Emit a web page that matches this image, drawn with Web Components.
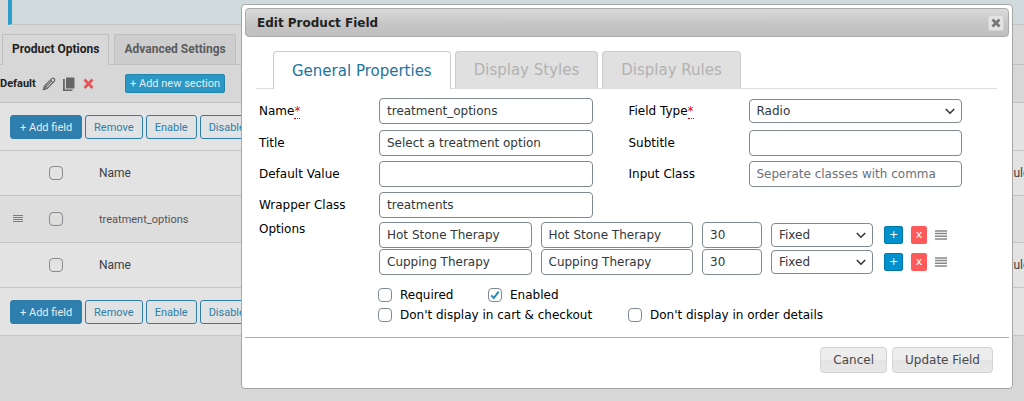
<!DOCTYPE html>
<html lang="en">
<head>
<meta charset="utf-8">
<title>Edit Product Field</title>
<style>
  body {
    margin: 0;
    min-height: 100vh;
    overflow: hidden;
    position: relative;
    background: #d7d7d7;
    font-family: Roboto, "Liberation Sans", sans-serif;
    font-size: 12px;
    color: #3c4146;
  }

  field-dialog {
    position: absolute;
    top: 4px;
    left: 241px;
    right: 11px;
  }
</style>
</head>
<body>
<admin-page>
  <page-tab slot="tabs" active>Product Options</page-tab>
  <page-tab slot="tabs">Advanced Settings</page-tab>
  <section-bar slot="section">Default</section-bar>
  <field-table slot="fields"></field-table>
</admin-page>

<field-dialog heading="Edit Product Field">
  <dialog-tabs slot="tabs" labels="General Properties,Display Styles,Display Rules"></dialog-tabs>
  <form-grid>
    <text-field label="Name" value="treatment_options" required></text-field>
    <select-field label="Field Type" value="Radio" required></select-field>
    <text-field label="Title" value="Select a treatment option"></text-field>
    <text-field label="Subtitle"></text-field>
    <text-field label="Default Value"></text-field>
    <text-field label="Input Class" placeholder="Seperate classes with comma"></text-field>
    <text-field label="Wrapper Class" value="treatments"></text-field>
  </form-grid>
  <option-list label="Options">
    <option-row value="Hot Stone Therapy" price="30" type="Fixed"></option-row>
    <option-row value="Cupping Therapy" price="30" type="Fixed"></option-row>
  </option-list>
  <check-grid>
    <check-field label="Required"></check-field>
    <check-field label="Enabled" checked></check-field>
    <check-field class="wide" label="Don't display in cart &amp; checkout"></check-field>
    <check-field class="wide" label="Don't display in order details"></check-field>
  </check-grid>
  <dialog-button slot="buttons">Cancel</dialog-button>
  <dialog-button slot="buttons">Update Field</dialog-button>
</field-dialog>

<script>
const chevron = `
  <svg width="12" height="12" viewBox="0 0 12 12" fill="none" stroke="#32373c" stroke-width="1.6" aria-hidden="true">
    <path d="M1.8 4l4.2 4.2L10.200 4"/>
  </svg>`;

// shared by every text box and drop-down in the dialog
const controlStyles = `
  input, select {
    box-sizing: border-box;
    width: 100%;
    min-width: 0;
    height: 26px;
    margin: 0;
    padding: 0 7px;
    border: 1px solid #7e8993;
    border-radius: 4px;
    background: #fff;
    color: #32373c;
    font: inherit;
  }
  input::placeholder { color: #6c7177; opacity: 1; }
  select { appearance: none; height: 24px; padding-right: 22px; }
  .select { display: grid; align-items: center; }
  .select > * { grid-area: 1 / 1; }
  .select svg { justify-self: end; margin-right: 6px; pointer-events: none; }
`;

class BaseElement extends HTMLElement {
  constructor() {
    super();
    this.attachShadow({ mode: "open" });
  }

  connectedCallback() {
    this.shadowRoot.innerHTML = this.template();
  }

  attr(name) {
    return this.getAttribute(name) || "";
  }
}

class AdminPage extends BaseElement {
  template() {
    return `
      <style>
        :host { display: block; }
        .notice {
          height: 24px;
          margin-left: 8px;
          border-left: 4px solid #2a9fcb;
          border-bottom: 1px solid #c0c4c5;
          background: #cfdadd;
        }
        nav {
          display: flex;
          gap: 5px;
          padding: 9px 2px 0;
          border-bottom: 1px solid #bfbfbf;
        }
      </style>
      <div class="notice"></div>
      <nav><slot name="tabs"></slot></nav>
      <slot name="section"></slot>
      <slot name="fields"></slot>
    `;
  }
}

class PageTab extends BaseElement {
  template() {
    return `
      <style>
        :host { display: block; }
        a {
          display: block;
          padding: 0 9px;
          line-height: 29px;
          border: 1px solid #bfbfbf;
          border-bottom: 0;
          background: #cdcdcd;
          color: #5b5c5d;
          font-weight: 700;
          text-decoration: none;
        }
        :host([active]) a {
          margin-bottom: -1px;
          padding-bottom: 1px;
          background: #d7d7d7;
          color: #222;
        }
      </style>
      <a href="#"><slot></slot></a>
    `;
  }
}

class SectionBar extends BaseElement {
  template() {
    return `
      <style>
        :host {
          display: flex;
          align-items: center;
          height: 37px;
          border-bottom: 1px solid #bfbfbf;
          color: #222;
          font-size: 11px;
          font-weight: 700;
        }
        svg { display: block; }
        .name { width: 35px; }
        .icons { display: flex; align-items: center; gap: 6px; margin: 0 29px 0 7px; }
        .icon { padding: 0; border: 0; background: none; }
        .add {
          height: 19px;
          padding: 0 4px;
          border: 1px solid #2385ac;
          border-radius: 2px;
          background: #2b97c4;
          color: #e4edf0;
          font: inherit;
          font-weight: 400;
        }
      </style>
      <span class="name"><slot></slot></span>
      <div class="icons">
        <button class="icon" aria-label="Edit section">
          <svg width="14" height="14" viewBox="0 0 14 14" fill="none" stroke="#666" stroke-width="1.1">
            <path d="M1.500 12.500l1-3.600L9.600 1.800a1.500 1.500 0 0 1 2.600 2.500L5.200 11.500z"/>
            <path d="M8.400 3l2.600 2.600M2.500 9l2.600 2.500M9.300 4.300l-5.500 5.600"/>
            <path d="M1.500 12.500l.5-1.600 1.100 1.100z" fill="#666"/>
          </svg>
        </button>
        <button class="icon" aria-label="Copy section">
          <svg width="14" height="14" viewBox="0 0 14 14" fill="#666">
            <path d="M4 .5h8.500v11H4z"/>
            <path d="M1 2h1.800v10.500h7.700V14H1z"/>
          </svg>
        </button>
        <button class="icon" aria-label="Remove section">
          <svg width="14" height="14" viewBox="0 0 14 14" stroke="#e25555" stroke-width="2.600">
            <path d="M2.500 2.500l8 8.500M10.500 2.500l-8 8.500"/>
          </svg>
        </button>
      </div>
      <button class="add">+ Add new section</button>
    `;
  }
}

class FieldTable extends BaseElement {
  toolbar() {
    return `
      <div class="toolbar">
        <button class="primary">+ Add field</button>
        <button>Remove</button>
        <button>Enable</button>
        <button>Disable</button>
      </div>`;
  }

  headRow(id) {
    return `
      <tr>
        <th class="sort"></th>
        <th class="check"><input type="checkbox" id="${id}" aria-label="Select all"></th>
        <th><label for="${id}">Name</label></th>
        <th class="rules">Rules</th>
      </tr>`;
  }

  template() {
    return `
      <style>
        :host { display: block; background: #e3e3e3; border-bottom: 1px solid #c4c4c4; }
        .toolbar { display: flex; gap: 3px; padding: 12px 10px 11px; }
        button {
          height: 24px;
          padding: 0 8px;
          border: 1px solid #2e7ea9;
          border-radius: 3px;
          background: #e0e2e3;
          color: #2e7ea9;
          font: inherit;
          font-size: 11px;
        }
        .primary { background: #2e7fae; color: #e6edf1; padding: 0 9px; }
        table { width: 100%; border-collapse: collapse; table-layout: fixed; }
        th, td {
          box-sizing: border-box;
          height: 45px;
          padding: 0;
          border: solid #c4c4c4;
          border-width: 1px 0;
          text-align: left;
          font-weight: 400;
        }
        td { height: 47px; background: #dddddd; font-size: 11px; color: #555; }
        .sort { width: 49px; }
        .check { width: 50px; }
        .rules { width: 18px; }
        .sort svg { display: block; margin-left: 13px; }
        input {
          appearance: none;
          display: block;
          box-sizing: border-box;
          width: 14px;
          height: 14px;
          margin: 0;
          border: 1px solid #868a8e;
          border-radius: 4px;
        }
      </style>
      ${this.toolbar()}
      <table>
        <thead>${this.headRow("all-top")}</thead>
        <tbody>
          <tr>
            <td class="sort">
              <svg width="10" height="8" viewBox="0 0 10 8" stroke="#7c7c7c" stroke-width="1">
                <path d="M0 .5h10M0 2.500h10M0 4.500h10M0 6.500h10"/>
              </svg>
            </td>
            <td class="check"><input type="checkbox" id="row" aria-label="Select field"></td>
            <td><label for="row">treatment_options</label></td>
            <td></td>
          </tr>
        </tbody>
        <tfoot>${this.headRow("all-bottom")}</tfoot>
      </table>
      ${this.toolbar()}
    `;
  }
}

class FieldDialog extends BaseElement {
  template() {
    return `
      <style>
        :host {
          display: block;
          box-sizing: border-box;
          padding: 3px;
          border: 1px solid #a6a6a6;
          border-radius: 4px;
          background: #fff;
          font-family: "DejaVu Sans", Verdana, sans-serif;
          font-size: 12px;
          color: #000;
        }
        header {
          display: flex;
          align-items: center;
          justify-content: space-between;
          box-sizing: border-box;
          height: 29px;
          padding: 0 4px 0 11px;
          border: 1px solid #aaa;
          border-radius: 4px;
          background: linear-gradient(#dadada, #c4c4c4 60%, #c0c0c0);
          color: #222;
        }
        h2 { margin: 0; font-size: 12px; font-weight: 700; }
        .close {
          width: 16px;
          height: 16px;
          padding: 0;
          border: 1px solid #d3d3d3;
          border-radius: 3px;
          background: #e4e4e4;
        }
        .close svg { display: block; margin: auto; }
        .content { padding: 0 47px 14px 14px; }
        footer {
          display: flex;
          justify-content: flex-end;
          gap: 5px;
          padding: 9px 16px 12px;
          border-top: 1px solid #aaa;
        }
      </style>
      <header>
        <h2>${this.attr("heading")}</h2>
        <button class="close" aria-label="Close">
          <svg width="10" height="10" viewBox="0 0 10 10" stroke="#777" stroke-width="2.800">
            <path d="M1.500 1.500l7 7M8.500 1.500l-7 7"/>
          </svg>
        </button>
      </header>
      <slot name="tabs"></slot>
      <div class="content"><slot></slot></div>
      <footer><slot name="buttons"></slot></footer>
    `;
  }
}

class DialogTabs extends BaseElement {
  template() {
    const tabs = this.attr("labels").split(",");
    return `
      <style>
        :host {
          display: flex;
          gap: 4px;
          margin: 14px 12px 9px 11px;
          padding-left: 17px;
          border-bottom: 1px solid #ddd;
        }
        button {
          height: 37px;
          padding: 0 18px;
          border: 1px solid #ccc;
          border-bottom: 0;
          border-radius: 4px 4px 0 0;
          background: #e0e0e0;
          color: #b2b2b2;
          font: inherit;
          font-size: 15px;
        }
        button:first-of-type {
          height: 38px;
          margin-bottom: -1px;
          background: #fff;
          color: #2174a0;
        }
      </style>
      ${tabs.map((tab) => `<button>${tab}</button>`).join("")}
    `;
  }
}

class FormGrid extends BaseElement {
  template() {
    return `
      <style>
        :host {
          display: grid;
          grid-template-columns: 1fr 1fr;
          grid-template-rows: 27px;
          gap: 5px 36px;
        }
      </style>
      <slot></slot>
    `;
  }
}

class TextField extends BaseElement {
  control() {
    return `<input id="control" type="text" value="${this.attr("value")}" placeholder="${this.attr("placeholder")}">`;
  }

  template() {
    const mark = this.hasAttribute("required") ? `<abbr title="required">*</abbr>` : "";
    return `
      <style>
        ${controlStyles}
        :host {
          display: grid;
          grid-template-columns: 120px 1fr;
          align-items: start;
        }
        label { line-height: 26px; }
        abbr { color: #e00; text-decoration: none; border-bottom: 1px dotted #e00; }
        .select { height: 26px; }
      </style>
      <label for="control">${this.attr("label")}${mark}</label>
      ${this.control()}
    `;
  }
}

class SelectField extends TextField {
  control() {
    return `
      <div class="select">
        <select id="control"><option>${this.attr("value")}</option></select>
        ${chevron}
      </div>`;
  }
}

class OptionList extends BaseElement {
  template() {
    return `
      <style>
        :host {
          display: grid;
          grid-template-columns: 120px 1fr;
          margin: 4px 0 12px;
        }
        .label { line-height: 14px; }
        .rows { display: grid; gap: 1px; }
      </style>
      <span class="label">${this.attr("label")}</span>
      <div class="rows"><slot></slot></div>
    `;
  }
}

class OptionRow extends BaseElement {
  template() {
    return `
      <style>
        ${controlStyles}
        :host { display: flex; align-items: center; gap: 9px; margin-right: 15px; }
        .text { flex: 1; }
        .price { width: 60px; }
        .select { width: 102px; }
        .actions { display: flex; align-items: center; gap: 8px; margin-left: 2px; }
        button {
          height: 18px;
          padding: 0;
          border: 0;
          border-radius: 2px;
          color: #fff;
          font: inherit;
          font-size: 11px;
          line-height: 16px;
        }
        .add { width: 19px; background: #0091cd; border: 1px solid #0079ad; }
        .remove { width: 16px; background: #ff5a5a; }
        svg { display: block; }
      </style>
      <input class="text" type="text" aria-label="Option value" value="${this.attr("value")}">
      <input class="text" type="text" aria-label="Option text" value="${this.attr("value")}">
      <input class="price" type="text" aria-label="Price" value="${this.attr("price")}">
      <div class="select">
        <select aria-label="Price type"><option>${this.attr("type")}</option></select>
        ${chevron}
      </div>
      <div class="actions">
        <button class="add">+</button>
        <button class="remove">x</button>
        <svg width="12" height="10" viewBox="0 0 12 10" stroke="#888" stroke-width="1.500">
          <path d="M0 1h12M0 3.600h12M0 6.300h12M0 9h12"/>
        </svg>
      </div>
    `;
  }
}

class CheckGrid extends BaseElement {
  template() {
    return `
      <style>
        :host {
          display: grid;
          grid-template-columns: 110px 140px 1fr;
          row-gap: 4px;
          margin-left: 119px;
        }
        ::slotted(.wide:not(:last-child)) { grid-column: span 2; }
      </style>
      <slot></slot>
    `;
  }
}

class CheckField extends BaseElement {
  template() {
    return `
      <style>
        :host { display: flex; align-items: center; gap: 8px; white-space: nowrap; }
        .box { display: grid; place-items: center; }
        .box > * { grid-area: 1 / 1; }
        input {
          appearance: none;
          box-sizing: border-box;
          width: 14px;
          height: 14px;
          margin: 0;
          border: 1px solid #7e8993;
          border-radius: 4px;
          background: #fff;
        }
        svg { display: none; pointer-events: none; }
        input:checked + svg { display: block; }
        label { line-height: 16px; }
      </style>
      <span class="box">
        <input type="checkbox" id="box" ${this.hasAttribute("checked") ? "checked" : ""}>
        <svg width="12" height="12" viewBox="0 0 12 12" fill="none" stroke="#1e8cbe" stroke-width="2">
          <path d="M2.300 6.400l2.500 2.600L9.600 2.600"/>
        </svg>
      </span>
      <label for="box">${this.attr("label")}</label>
    `;
  }
}

class DialogButton extends BaseElement {
  template() {
    return `
      <style>
        :host { display: block; }
        button {
          height: 26px;
          padding: 0 12px;
          border: 1px solid #d3d3d3;
          border-radius: 4px;
          background: linear-gradient(#ededed 50%, #e4e4e4 50%, #e8e8e8);
          color: #484848;
          font: inherit;
        }
      </style>
      <button><slot></slot></button>
    `;
  }
}

customElements.define("admin-page", AdminPage);
customElements.define("page-tab", PageTab);
customElements.define("section-bar", SectionBar);
customElements.define("field-table", FieldTable);
customElements.define("field-dialog", FieldDialog);
customElements.define("dialog-tabs", DialogTabs);
customElements.define("form-grid", FormGrid);
customElements.define("text-field", TextField);
customElements.define("select-field", SelectField);
customElements.define("option-list", OptionList);
customElements.define("option-row", OptionRow);
customElements.define("check-grid", CheckGrid);
customElements.define("check-field", CheckField);
customElements.define("dialog-button", DialogButton);
</script>
</body>
</html>
